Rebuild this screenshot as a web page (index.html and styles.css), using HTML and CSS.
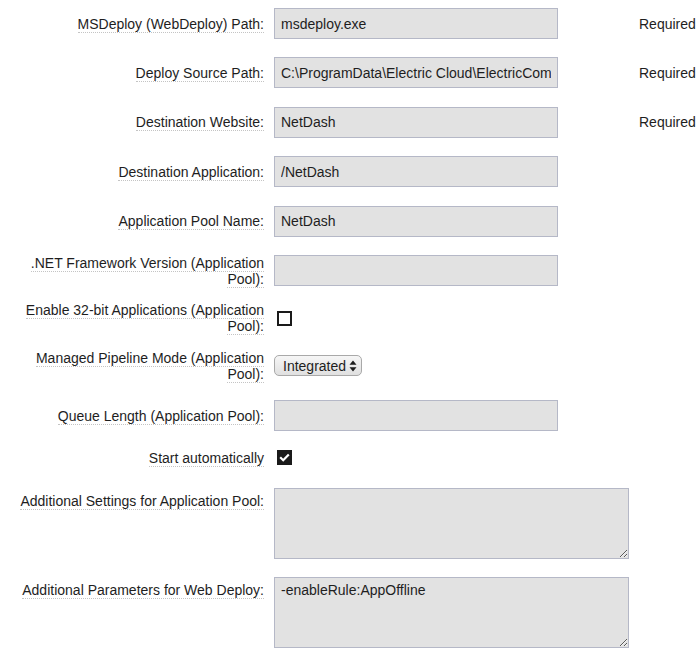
FILE: index.html
```html
<!DOCTYPE html>
<html>
<head>
<meta charset="utf-8">
<link rel="stylesheet" href="styles.css">
</head>
<body>
<form class="form">
  <div class="row">
    <label class="lbl"><span>MSDeploy (WebDeploy) Path:</span></label>
    <div class="field"><input class="text" type="text" value="msdeploy.exe"></div>
    <div class="req">Required</div>
  </div>
  <div class="row">
    <label class="lbl"><span>Deploy Source Path:</span></label>
    <div class="field"><input class="text" type="text" value="C:\ProgramData\Electric Cloud\ElectricCommander\workspace"></div>
    <div class="req">Required</div>
  </div>
  <div class="row">
    <label class="lbl"><span>Destination Website:</span></label>
    <div class="field"><input class="text" type="text" value="NetDash"></div>
    <div class="req">Required</div>
  </div>
  <div class="row">
    <label class="lbl"><span>Destination Application:</span></label>
    <div class="field"><input class="text" type="text" value="/NetDash"></div>
  </div>
  <div class="row">
    <label class="lbl"><span>Application Pool Name:</span></label>
    <div class="field"><input class="text" type="text" value="NetDash"></div>
  </div>
  <div class="row">
    <label class="lbl"><span>.NET Framework Version (Application Pool):</span></label>
    <div class="field"><input class="text" type="text" value=""></div>
  </div>
  <div class="row row-tight">
    <label class="lbl"><span>Enable 32-bit Applications (Application Pool):</span></label>
    <div class="field"><span class="check"></span></div>
  </div>
  <div class="row row-tight">
    <label class="lbl"><span>Managed Pipeline Mode (Application Pool):</span></label>
    <div class="field">
      <span class="select">Integrated<svg class="arrows" width="8" height="12" viewBox="0 0 8 12"><path d="M4 0.5 L7.5 4.8 L0.5 4.8 Z M4 11.5 L7.5 7.2 L0.5 7.2 Z" fill="#1e1e1e"/></svg></span>
    </div>
  </div>
  <div class="row">
    <label class="lbl"><span>Queue Length (Application Pool):</span></label>
    <div class="field"><input class="text" type="text" value=""></div>
  </div>
  <div class="row">
    <label class="lbl"><span>Start automatically</span></label>
    <div class="field"><span class="check checked"><svg width="11" height="9" viewBox="0 0 11 9"><path d="M1.2 4.3 L4.2 7.2 L9.8 1.4" fill="none" stroke="#fff" stroke-width="2.2"/></svg></span></div>
  </div>
  <div class="row row-area row-loose">
    <label class="lbl"><span>Additional Settings for Application Pool:</span></label>
    <div class="field"><textarea class="area"></textarea></div>
  </div>
  <div class="row row-area">
    <label class="lbl"><span>Additional Parameters for Web Deploy:</span></label>
    <div class="field"><textarea class="area">-enableRule:AppOffline</textarea></div>
  </div>
</form>
</body>
</html>
```
FILE: styles.css
```css
html, body {
  margin: 0;
  padding: 0;
  background: #ffffff;
}
body {
  padding: 8px;
  font-family: "Liberation Sans", Arial, Helvetica, sans-serif;
  font-size: 14px;
  color: #1e1e1e;
}
.form {
  display: flex;
  flex-direction: column;
  gap: 18.4px;
}
.row {
  display: grid;
  grid-template-columns: 256px 355px 1fr;
  column-gap: 10px;
  align-items: center;
}
.row-tight {
  margin-top: -3px;
}
.row-loose {
  margin-top: 4px;
}
.lbl {
  text-align: right;
  line-height: 16px;
}
.lbl span {
  border-bottom: 1px dotted #c4c4c4;
}
.row-area {
  align-items: start;
}
.row-area .lbl {
  padding-top: 5px;
}
.field {
  display: flex;
  align-items: center;
}
.text {
  box-sizing: border-box;
  width: 284px;
  height: 31px;
  margin: 0;
  padding: 0 6px;
  border: 1px solid #b5b8c7;
  background: #e2e2e2;
  font-family: "Liberation Sans", Arial, Helvetica, sans-serif;
  font-size: 14px;
  color: #1e1e1e;
  outline: none;
}
.area {
  box-sizing: border-box;
  width: 356px;
  height: 71px;
  margin: 0;
  padding: 4px 6px;
  border: 1px solid #b5b8c7;
  background: #e2e2e2;
  font-family: "Liberation Sans", Arial, Helvetica, sans-serif;
  font-size: 14px;
  color: #1e1e1e;
  outline: none;
}
.req {
  color: #1e1e1e;
}
.check {
  box-sizing: border-box;
  display: inline-flex;
  align-items: center;
  justify-content: center;
  width: 15px;
  height: 15px;
  margin-left: 3px;
  border: 2px solid #1a1a1a;
  background: #ffffff;
}
.check.checked {
  background: #1a1a1a;
}
.select {
  box-sizing: border-box;
  display: inline-flex;
  align-items: center;
  gap: 3px;
  width: 88px;
  height: 21px;
  padding: 0 0 0 8px;
  border: 1px solid #a9a9a9;
  border-radius: 5px;
  background: linear-gradient(#f6f6f6, #e0e0e0);
  font-size: 14px;
  color: #1e1e1e;
}
.arrows {
  display: block;
}
```
